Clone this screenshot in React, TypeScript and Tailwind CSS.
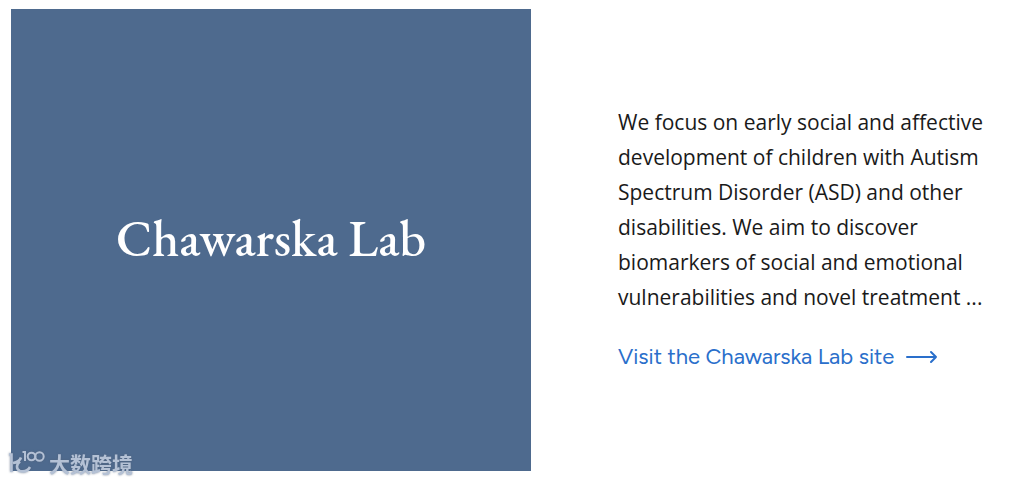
function Watermark() {
  return (
    <div className="absolute -left-1 bottom-[-6px] flex items-center gap-1 text-[#b4c1d5] drop-shadow-[0_0_1px_rgba(80,95,120,0.7)]">
      <svg width="38" height="28" viewBox="0 0 38 28" fill="none" stroke="currentColor" strokeWidth="2.6" aria-hidden="true">
        <path d="M2 5.500h2.500v17.500M14 8.500c-1 3-4 5-8 5.500M13 12.500c-4 3-4 8 0 9.500 4 1 8-.500 10-4" />
        <path d="M15.500 3h2.500v9" strokeWidth="2" />
        <circle cx="24.500" cy="7.500" r="3.800" strokeWidth="2" />
        <circle cx="32.500" cy="7.500" r="4.200" strokeWidth="2" />
      </svg>
      <span className="font-['Noto_Sans_CJK_SC',sans-serif] text-[21px] leading-7 font-bold">大数跨境</span>
    </div>
  );
}

export default function App() {
  return (
    <main className="min-h-screen bg-white pt-[9px] pb-[10px] pl-[11px]">
      <article className="grid grid-cols-[520fr_485fr]">
        <div className="relative flex min-h-[462px] items-center justify-center bg-[#4e6a8e] pb-1">
          <h2 className="font-['EB_Garamond','Liberation_Serif',serif] text-[51px] leading-none font-medium text-white">Chawarska Lab</h2>
          <Watermark />
        </div>
        <div className="flex flex-col justify-center gap-6 pr-4 pl-[87px]">
          <p className="font-['Segoe_UI','Selawik','Open_Sans',sans-serif] text-[21px] leading-[35px] text-[#1a1a1a]">
            We focus on early social and affective development of children with Autism Spectrum Disorder (ASD) and other disabilities. We aim to discover biomarkers of social and emotional vulnerabilities and novel treatment ...
          </p>
          <a href="#chawarska-lab" className="flex items-center gap-3 font-['Figtree','Lato',sans-serif] text-[22px] leading-9 text-[#2a6fcb]">
            <span>Visit the Chawarska Lab site</span>
            <svg width="32" height="14" viewBox="0 0 32 14" fill="none" stroke="currentColor" strokeWidth="2" strokeLinecap="round" strokeLinejoin="round" aria-hidden="true">
              <path d="M1 7h29M25 2l5 5-5 5" />
            </svg>
          </a>
        </div>
      </article>
    </main>
  );
}
